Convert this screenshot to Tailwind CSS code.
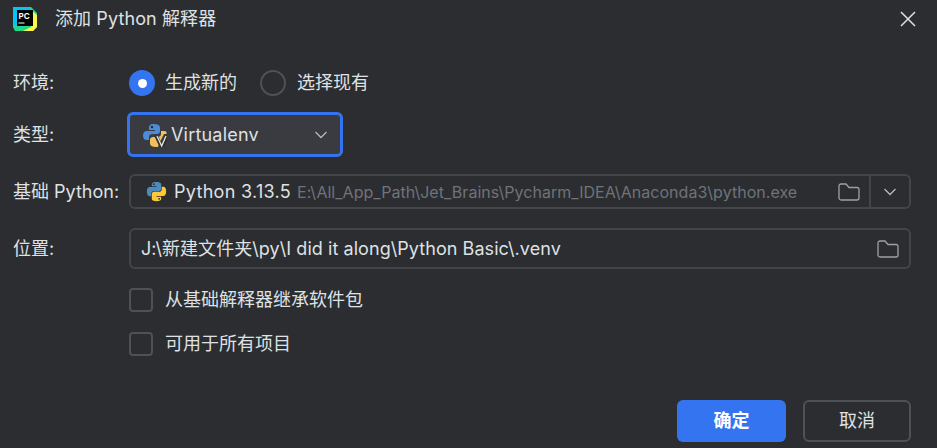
<!DOCTYPE html>
<html lang="en">
<head>
    <meta charset="UTF-8">
    <title>添加 Python 解释器</title>
    <script src="https://cdn.jsdelivr.net/npm/@tailwindcss/browser@4"></script>
</head>
<body class="w-[937px] h-[448px] overflow-hidden bg-[#2b2d30] text-[#dfe1e5] text-[18px] leading-[24px] font-['Inter','Noto_Sans_CJK_SC',sans-serif]">

    <!-- title bar -->
    <div class="h-[37px] flex items-center pl-[13px] pr-[20px]">
        <svg class="w-[24px] h-[24px] shrink-0" viewBox="0 0 24 24">
            <path d="M0 0H18L24 6V20L20 24H2L0 20Z" fill="#21d789"/>
            <path d="M0 0H17V6H0Z" fill="#07c3f2"/>
            <path d="M0 0H6V18H1Z" fill="#07c3f2"/>
            <path d="M18 3L24 8V20L20 24H10L18 20Z" fill="#fcf84a"/>
            <rect x="4" y="3" width="16" height="16" fill="#000"/>
            <text x="5.5" y="11.5" font-size="8" font-weight="700" fill="#fff" font-family="Inter">PC</text>
            <rect x="5.5" y="15.5" width="6" height="1" fill="#fff"/>
        </svg>
        <span class="ml-[18px] text-[#dfe1e5] tracking-[0.1px]">添加 Python 解释器</span>
        <svg class="ml-auto w-[18px] h-[18px]" viewBox="0 0 18 18" fill="none" stroke="#dfe1e5" stroke-width="1.5"><path d="M2 2L16 16M16 2L2 16"/></svg>
    </div>

    <div class="pl-[13px] pr-[26px]">
        <!-- env -->
        <div class="mt-[33px] h-[26px] flex items-center">
            <span class="w-[116px]">环境:</span>
            <span class="w-[26px] h-[26px] rounded-full bg-[#3574f0] flex items-center justify-center"><span class="w-[9px] h-[9px] rounded-full bg-white"></span></span>
            <span class="ml-[10px]">生成新的</span>
            <span class="ml-[23px] w-[26px] h-[26px] rounded-full border-2 border-[#4e5157]"></span>
            <span class="ml-[11px]">选择现有</span>
        </div>

        <!-- type -->
        <div class="mt-[16px] flex items-center">
            <span class="w-[114px]">类型:</span>
            <div class="w-[216px] h-[45px] rounded-[6px] border-[3px] border-[#3574f0] bg-[#393b40] flex items-center pl-[13px] pr-[13px]">
                <svg class="w-[24px] h-[24px] shrink-0" viewBox="0 0 24 24">
                    <path d="M11 1C6.5 1 6 3 6 4.5V7H12V8H3.5C1.5 8 0 9.5 0 12.5S1.5 17 3.5 17H6V14C6 12 7.5 11 9.500 11H14C15.500 11 17 10 17 8.500V4.500C17 2.500 15 1 11 1Z" fill="#4b8bd8"/>
                    <path d="M18 8V11C18 13 16.500 14 14.500 14H10C8.500 14 7 15 7 16.500V20.500C7 22.500 9 24 13 24H15L17 19L21 11H23.500V9C23.500 8.500 22 8 20.500 8Z" fill="#f0c05a"/>
                    <circle cx="9" cy="4" r="1.2" fill="#2b2d30"/>
                    <path d="M13 12.500L18 23H19.500L24 12.500" fill="none" stroke="#2b2d30" stroke-width="3.500"/>
                    <path d="M14 13L18.700 23L23 13" fill="none" stroke="#dfe1e5" stroke-width="1.400"/>
                </svg>
                <span class="ml-[4px] tracking-[0.2px]">Virtualenv</span>
                <svg class="ml-auto mr-[-1px] w-[14px] h-[10px]" viewBox="0 0 14 10" fill="none" stroke="#b4b8bf" stroke-width="1.300"><path d="M1.500 2L7 7.500L12.500 2"/></svg>
            </div>
        </div>

        <!-- base python -->
        <div class="mt-[17px] flex items-center">
            <span class="w-[116px] whitespace-nowrap">基础 Python:</span>
            <div class="w-[782px] h-[35px] rounded-[6px] border-2 border-[#43454a] flex items-center pl-[15px]">
                <svg class="w-[21px] h-[21px] shrink-0" viewBox="0 0 24 24">
                    <path d="M11.900 1C6.300 1 6.700 3.400 6.700 3.400V6H12V6.800H4.600S1 6.400 1 12S4.100 17.300 4.100 17.300H6V14.700S5.900 11.600 9.100 11.600H14.400S17.400 11.700 17.400 8.700V3.800S17.800 1 11.900 1ZM9 2.700A1 1 0 1 1 9 4.700A1 1 0 0 1 9 2.700Z" fill="#4b8bbe"/>
                    <path d="M12.100 23C17.700 23 17.300 20.600 17.300 20.600V18H12V17.200H19.400S23 17.600 23 12S19.900 6.700 19.900 6.700H18V9.300S18.100 12.400 14.900 12.400H9.600S6.600 12.300 6.600 15.300V20.200S6.200 23 12.100 23ZM15 21.300A1 1 0 1 1 15 19.300A1 1 0 0 1 15 21.300Z" fill="#fdc936"/>
                </svg>
                <span class="ml-[7px] whitespace-nowrap tracking-[0.3px]">Python 3.13.5</span>
                <span class="ml-[6px] text-[16px] whitespace-nowrap text-[#6f737a] tracking-[0.03px]">E:\All_App_Path\Jet_Brains\Pycharm_IDEA\Anaconda3\python.exe</span>
                <svg class="ml-auto mr-[9px] w-[22px] h-[18px] shrink-0" viewBox="0 0 22 18" fill="none" stroke="#9da0a8" stroke-width="1.300"><path d="M1 3C1 2 1.800 1 3 1H8L11 4.500H19C20 4.500 21 5.300 21 6.500V15C21 16 20 17 19 17H3C2 17 1 16 1 15Z"/></svg>
                <div class="w-[40px] h-full border-l-2 border-[#43454a] flex items-center justify-center shrink-0">
                    <svg class="w-[14px] h-[10px]" viewBox="0 0 14 10" fill="none" stroke="#b4b8bf" stroke-width="1.300"><path d="M1.500 2L7 7.500L12.500 2"/></svg>
                </div>
            </div>
        </div>

        <!-- location -->
        <div class="mt-[19px] flex items-center">
            <span class="w-[116px]">位置:</span>
            <div class="w-[782px] h-[41px] rounded-[6px] border-2 border-[#43454a] flex items-center pl-[10px] pr-[10px]">
                <span class="whitespace-nowrap tracking-[0.06px]">J:\新建文件夹\py\I did it along\Python Basic\.venv</span>
                <svg class="ml-auto w-[22px] h-[18px] shrink-0" viewBox="0 0 22 18" fill="none" stroke="#9da0a8" stroke-width="1.300"><path d="M1 3C1 2 1.800 1 3 1H8L11 4.500H19C20 4.500 21 5.300 21 6.500V15C21 16 20 17 19 17H3C2 17 1 16 1 15Z"/></svg>
            </div>
        </div>

        <!-- checkboxes -->
        <div class="mt-[19px] ml-[116px] flex items-center">
            <span class="w-[24px] h-[24px] rounded-[4px] border-2 border-[#4e5157]"></span>
            <span class="ml-[12px]">从基础解释器继承软件包</span>
        </div>
        <div class="mt-[20px] ml-[116px] flex items-center">
            <span class="w-[24px] h-[24px] rounded-[4px] border-2 border-[#4e5157]"></span>
            <span class="ml-[12px]">可用于所有项目</span>
        </div>

        <!-- buttons -->
        <div class="mt-[44px] flex justify-end gap-[17px]">
            <button class="w-[109px] h-[42px] rounded-[6px] bg-[#3574f0] text-white font-bold">确定</button>
            <button class="w-[108px] h-[42px] rounded-[6px] border-2 border-[#4e5157] text-[#dfe1e5]">取消</button>
        </div>
    </div>
</body>
</html>
